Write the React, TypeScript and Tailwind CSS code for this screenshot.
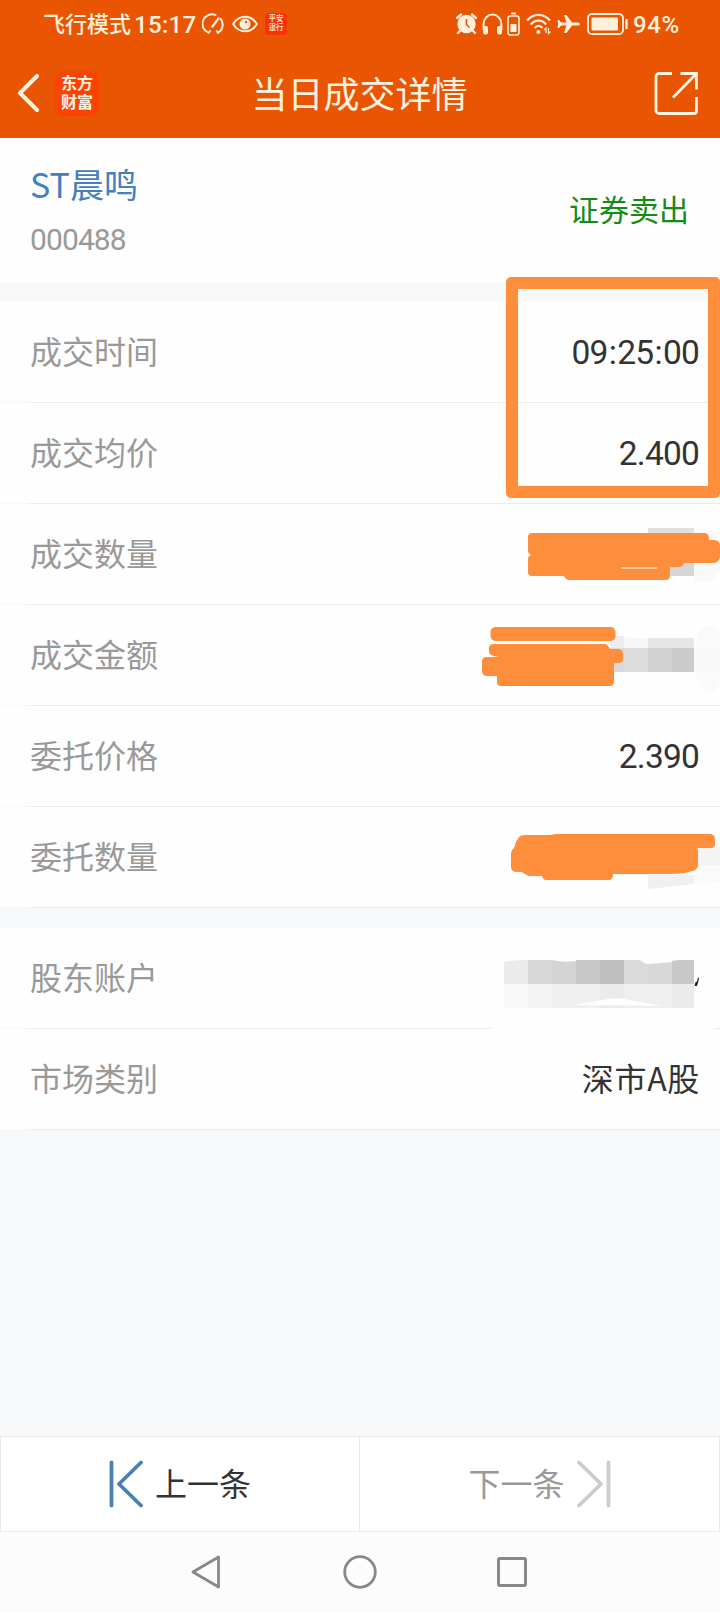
import type { ReactNode } from "react";

const cjk = "font-['Noto_Sans_CJK_SC',sans-serif]";
const num = "font-['Roboto','Noto_Sans_CJK_SC',sans-serif]";
const badge = "font-['Liberation_Sans','Noto_Sans_CJK_SC',sans-serif]";

function StatusBar() {
  return (
    <div className="flex h-12 items-center pl-[43px] pr-[36px] text-[#fff0dc]">
      <span className="w-[88px] whitespace-nowrap pb-[4px] text-[22px] font-medium leading-[44px]">飞行模式</span>
      <span className={`${num} ml-[3px] w-[62px] whitespace-nowrap pt-[1px] text-[24px] font-medium leading-[46px] tracking-[0.300px]`}>15:17</span>
      <svg className="ml-[6px] h-[22px] w-[22px]" viewBox="0 0 22 22" fill="none" stroke="currentColor" strokeWidth="2" strokeLinecap="round">
        <path d="M6.500 19.800L8 18M6.500 19.800A9.500 9.500 0 0 1 13.500 2M18.800 6A9.500 9.500 0 0 1 16 19.800L14.800 18" />
        <path d="M10.500 13.500L16.500 5.500" strokeWidth="2.200" />
      </svg>
      <svg className="ml-[8px] h-[18px] w-[26px]" viewBox="0 0 26 18" fill="none">
        <path d="M1.200 9C7 -.8 19 -.8 24.800 9C19 18.800 7 18.800 1.200 9z" stroke="currentColor" strokeWidth="2" />
        <circle cx="13" cy="9" r="5.500" fill="currentColor" />
        <circle cx="14" cy="7" r="1.200" fill="#e95502" />
      </svg>
      <div className={`${badge} ml-[7px] flex h-[22px] w-[22px] flex-col items-center rounded-[4px] bg-[#f5340b] pt-[1px] text-[7.500px] font-medium leading-[9px]`}>
        <span>平安</span>
        <span>银行</span>
      </div>

      <div className="ml-auto flex items-center">
        <svg className="h-[22px] w-[21px]" viewBox="0 0 21 22" fill="none">
          <path d="M1 5L5 1.500M20 5L16 1.500M4 18l-2 2M17 18l2 2" stroke="currentColor" strokeWidth="2.400" strokeLinecap="round" />
          <circle cx="10.500" cy="11" r="9.200" fill="currentColor" />
          <path d="M10.500 6v5.500l3 3" stroke="#e95502" strokeWidth="1.600" />
        </svg>
        <svg className="ml-[5px] h-[22px] w-[21px]" viewBox="0 0 21 22" fill="none">
          <path d="M1.600 17v-6a8.900 9.400 0 0 1 17.800 0v6" stroke="currentColor" strokeWidth="2" />
          <rect x="1" y="13" width="5" height="8.500" rx="2" fill="currentColor" />
          <rect x="15" y="13" width="5" height="8.500" rx="2" fill="currentColor" />
        </svg>
        <svg className="ml-[4px] h-[24px] w-[13px]" viewBox="0 0 13 24" fill="none">
          <rect x="1" y="4" width="11" height="19" rx="2.500" stroke="currentColor" strokeWidth="1.600" />
          <path d="M4 1.500h5" stroke="currentColor" strokeWidth="2" />
          <rect x="3.500" y="12" width="6" height="8" fill="currentColor" />
        </svg>
        <svg className="ml-[6px] h-[22px] w-[26px]" viewBox="0 0 26 22" fill="none" stroke="currentColor" strokeWidth="2.200">
          <path d="M1 7.500C7.500 0 17.500 0 24 7.500M4.800 11.500C9 6.300 16 6.300 20.200 11.500M8.600 15C11 12 14 12 16.400 15" />
          <circle cx="12.400" cy="19" r="2" fill="currentColor" stroke="none" />
          <path d="M20 20v-5l-2 2M22.500 15v5.500l2-2" strokeWidth="1.300" />
        </svg>
        <svg className="ml-[5px] h-[20px] w-[24px]" viewBox="0 0 24 20" fill="currentColor">
          <path d="M23 10c0 1-1.200 1.600-3 1.600h-5L9.500 19H7l2.500-7.400H4L2 14H.5l.6-4L.5 6H2l2 2.400h5.500L7 1h2.500L15 8.400h5c1.800 0 3 .6 3 1.600z" />
        </svg>
        <svg className="ml-[6px] h-[22px] w-[42px]" viewBox="0 0 42 22" fill="none">
          <rect x="1" y="1" width="35" height="20" rx="4" stroke="currentColor" strokeWidth="1.800" />
          <rect x="4.500" y="4.500" width="26.500" height="13" rx="1" fill="currentColor" />
          <path d="M39.500 6v10" stroke="currentColor" strokeWidth="2.400" />
        </svg>
        <span className={`${num} ml-[4px] w-[51px] whitespace-nowrap pt-[1px] text-[24px] font-medium leading-[46px] tracking-[0.600px]`}>94%</span>
      </div>
    </div>
  );
}

function Header() {
  return (
    <header className="h-[138px] bg-[#e95502]">
      <StatusBar />
      <div className="grid h-[90px] grid-cols-[1fr_auto_1fr] items-center pl-[17px] pr-[22px] text-[#fff3e0]">
        <div className="flex items-center">
          <svg className="h-[38px] w-[24px]" viewBox="0 0 24 38" fill="none" stroke="currentColor" strokeWidth="4">
            <path d="M20 2L3 19l17 17" strokeLinecap="round" strokeLinejoin="round" />
          </svg>
          <div className={`${badge} ml-[14px] flex h-[45px] w-[44px] flex-col items-center justify-center rounded-[8px] bg-[#fb4305] text-[16px] font-bold leading-[19px]`}>
            <span>东方</span>
            <span>财富</span>
          </div>
        </div>
        <h1 className="pb-[3px] pl-[4px] text-[36px] font-normal leading-[48px]">当日成交详情</h1>
        <svg className="h-[43px] w-[44px] justify-self-end" viewBox="0 0 44 43" fill="none" stroke="currentColor" strokeWidth="2.800">
          <path d="M18 1.500H5a3 3 0 0 0-3 3v34a3 3 0 0 0 3 3h35a2.500 2.500 0 0 0 2.500-2.500V25" />
          <path d="M26.500 1.500h16v16M42.500 1.500L19 25.500" />
        </svg>
      </div>
    </header>
  );
}

function Row({ label, children }: { label: string; children?: ReactNode }) {
  return (
    <div className="relative h-[101px] border-b border-[#f7f7f7] bg-[#fefefe] pl-[30px]">
      <div className="flex h-[101px] items-center justify-between border-b border-[#ebebeb] pr-[21px]">
        <span className="pb-[4px] text-[32px] leading-[48px] text-[#999]">{label}</span>
        {children}
      </div>
    </div>
  );
}

function Value({ children }: { children: string }) {
  // colons sit wider than Roboto sets them
  return (
    <span className={`${num} flex pt-[2px] text-[33.500px] leading-[48px] tracking-[-0.800px] text-[#333]`}>
      {children.split(":").map((part, i) => (
        <span key={i}>
          {i > 0 && <span className="px-[1.200px]">:</span>}
          {part}
        </span>
      ))}
    </span>
  );
}

// hand-drawn strokes and mosaic over the private values, laid over the 101px row
function Cover({ children }: { children: ReactNode }) {
  return (
    <svg className="absolute right-0 top-0 h-[101px] w-[250px]" viewBox="0 0 250 101">
      {children}
    </svg>
  );
}

export default function App() {
  return (
    <div className={`${cjk} flex h-[1612px] w-[720px] flex-col overflow-hidden bg-[#f7f8fa]`}>
      <Header />

      <section className="flex h-[144px] items-center justify-between bg-[#fefefe] pl-[30px] pr-[31px]">
        <div className="pt-[1px]">
          <div className="h-[55px] text-[34px] leading-[51px] text-[#4480bb]">ST晨鸣</div>
          <div className={`${num} h-[50px] text-[30px] leading-[54px] tracking-[-0.900px] text-[#999]`}>000488</div>
        </div>
        <span className="pb-[4px] text-[30px] leading-[48px] text-[#148b14]">证券卖出</span>
      </section>

      <section className="relative mt-5">
        <Row label="成交时间">
          <Value>09:25:00</Value>
        </Row>
        <Row label="成交均价">
          <Value>2.400</Value>
        </Row>
        <Row label="成交数量">
          <Cover>
            <path d="M224 26h20q6 6 6 16v25l-10 12h-16z" fill="#f9f9f9" />
            <path d="M178 24h46v6h-46z" fill="#e0e0e0" />
            <path d="M200 55h24v17h-24z" fill="#d6d6d6" />
            <path d="M62 29h173q4 0 4 7h6q5 1 5 6v11q-2 6-6 6h-30q-1 4-5 4h-9v9q0 4-4 4H99q-3 0-5-4H62q-4 0-4-4V55q0-3 3-4-3-1-3-5V33q0-4 4-4z" fill="#ff8e3c" />
            <path d="M151 64h36" stroke="#ffdcb8" strokeWidth="1.500" />
          </Cover>
        </Row>
        <Row label="成交金额">
          <Cover>
            <ellipse cx="239" cy="54" rx="15" ry="34" fill="#fafafa" />
            <path d="M140 31h14v36h-14z" fill="#ededed" />
            <path d="M140 43h14v24h-14z" fill="#d9d9d9" />
            <path d="M154 32l24 2v9h-24z" fill="#f6f6f6" />
            <path d="M178 33h46v10h-46z" fill="#e6e6e6" />
            <path d="M154 43h24v24h-24z" fill="#dcdcdc" />
            <path d="M178 43h24v24h-24z" fill="#d2d2d2" />
            <path d="M202 43h22v24h-22z" fill="#cbcbcb" />
            <path d="M224 43h26v24h-26z" fill="#f9f9f9" />
            <rect x="20.500" y="22" width="125" height="14" rx="5" fill="#ff8e3c" />
            <path d="M24 39h112q2 1 4 5h9q4 1 4 5v5q0 4-4 4h-5v18q0 5-4 5H31q-4 0-4-4v-6H16q-4-1-4-5V56q0-4 5-4h12q-10-1-10-5v-4q0-4 5-4z" fill="#ff8e3c" />
          </Cover>
        </Row>
        <Row label="委托价格">
          <Value>2.390</Value>
        </Row>
        <Row label="委托数量">
          <Cover>
            <path d="M224 32h26v43l-26 2z" fill="#fafafa" />
            <path d="M227 40h23v18h-23z" fill="#f4f4f4" />
            <path d="M178 68h46v9l-46 5z" fill="#f0f0f0" />
            <path d="M86 27h155q4 1 4 5v5q0 4-4 4h-14l1 2v16q-2 5-6 5-7 3-22 3h-57v2q-1 4-4 4H76q-3 0-4-4H59q-3-1-7-4h-5q-6 0-6-5V46q0-3 3-5 1-6 5-11 2-2 6-2h25z" fill="#ff8e3c" />
          </Cover>
        </Row>

        {/* highlighted fill time and price */}
        <div className="absolute -top-[25px] right-0 h-[221px] w-[214px] rounded-[5px] border-[12px] border-[#ff8e3c]" />
      </section>

      <section className="mt-5">
        <Row label="股东账户">
          <Cover>
            <path d="M14 60h222l8 12v29H21z" fill="#fdfdfd" />
            <path d="M34 34q10-2 24-2v24H34z" fill="#ebebeb" />
            <path d="M58 32h24v24H58z" fill="#d7d7d7" />
            <path d="M82 32q12 3 24 1v23H82z" fill="#d4d4d4" />
            <path d="M106 32h24v24h-24z" fill="#c7c7c7" />
            <path d="M130 32h24v24h-24z" fill="#bfbfbf" />
            <path d="M154 32h16q4 4 8 4v20h-24z" fill="#dadada" />
            <path d="M178 36l24-2v22h-24z" fill="#d8d8d8" />
            <path d="M202 33l6-1h16v24h-22z" fill="#c8c8c8" />
            <path d="M34 56h24v24H34z" fill="#f8f8f8" />
            <path d="M58 56h24v24H58z" fill="#f3f3f3" />
            <path d="M82 56h48v24H82z" fill="#f0f0f0" />
            <path d="M130 56h24v24h-24z" fill="#ebebeb" />
            <path d="M154 56h48v24h-48z" fill="#efefef" />
            <path d="M202 56h22v24h-22z" fill="#ebebeb" />
            <path d="M104 77l34-6q12-2 22 1l32 6z" fill="#fefefe" />
            <path d="M229 49.500l-.5 3.500-1.500 5h-2.500l.8-3.500 1.700-1 1-4z" fill="#222" />
          </Cover>
        </Row>
        <Row label="市场类别">
          <span className="-mr-px pb-[4px] text-[32px] leading-[48px] tracking-[0.700px] text-[#333]">深市A股</span>
        </Row>
      </section>

      <div className="mt-auto grid h-[96px] shrink-0 grid-cols-2 bg-white text-[32px] leading-[48px]">
        <button className="flex items-center justify-center border border-[#e9e9eb] text-[#333]">
          <svg className="mr-[12px] h-[48px] w-[34px]" viewBox="0 0 34 48" fill="none" stroke="#4b80b4" strokeWidth="3.800" strokeLinecap="round" strokeLinejoin="round">
            <path d="M2.500 2.500v43M32 2.500L10 24l22 21.500" />
          </svg>
          <span className="pb-[4px]">上一条</span>
        </button>
        <button className="flex items-center justify-center border border-l-0 border-[#e9e9eb] text-[#999]">
          <span className="pb-[4px]">下一条</span>
          <svg className="ml-[12px] h-[48px] w-[34px]" viewBox="0 0 34 48" fill="none" stroke="#ccc" strokeWidth="3.800" strokeLinecap="round" strokeLinejoin="round">
            <path d="M31.500 2.500v43M2 2.500L24 24 2 45.500" />
          </svg>
        </button>
      </div>

      <nav className="flex h-[80px] shrink-0 items-center justify-between bg-[#fcfcfc] pl-[190px] pr-[193px]">
        <svg className="h-[34px] w-[30px]" viewBox="0 0 30 34" fill="none" stroke="#888" strokeWidth="2.800" strokeLinejoin="round">
          <path d="M28.500 2v30L3 17z" />
        </svg>
        <svg className="ml-[3px] h-[34px] w-[34px]" viewBox="0 0 34 34" fill="none" stroke="#888" strokeWidth="2.800">
          <circle cx="17" cy="17" r="15.300" />
        </svg>
        <div className="h-[30px] w-[30px] rounded-[3px] border-[3px] border-[#888]" />
      </nav>
    </div>
  );
}
